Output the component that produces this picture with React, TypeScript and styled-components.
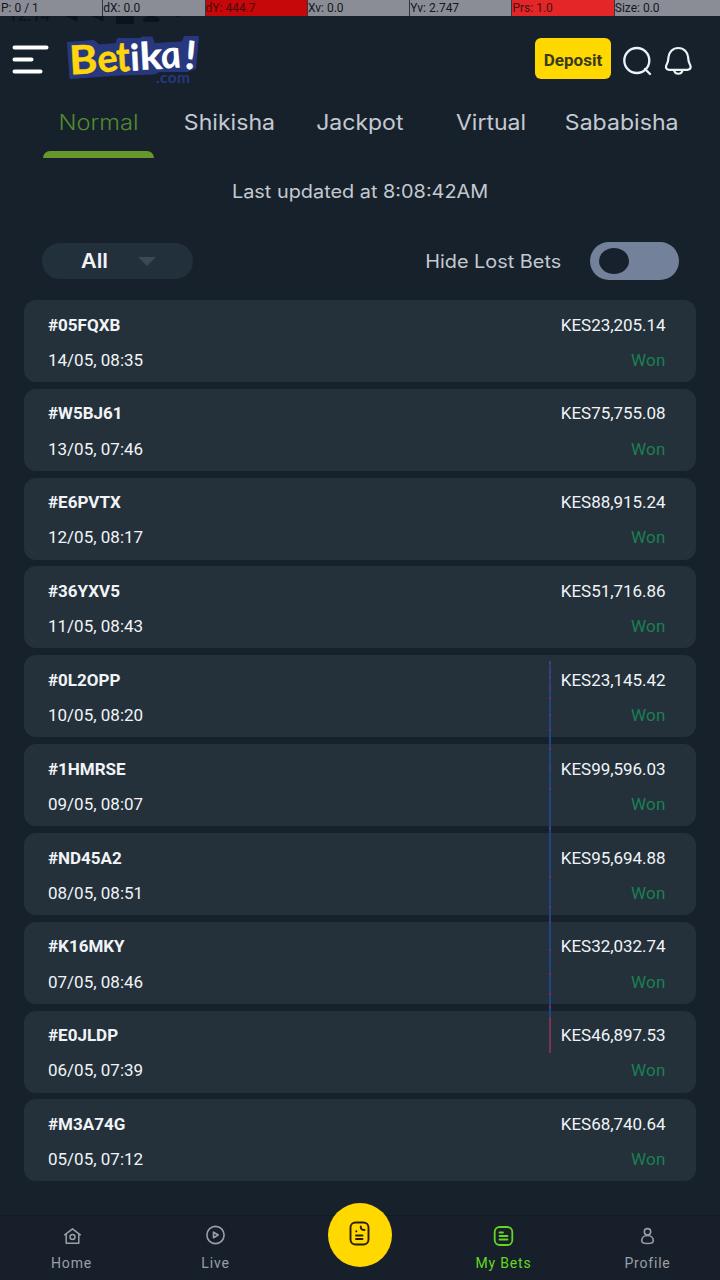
import React from "react";
import styled, { createGlobalStyle } from "styled-components";

const GlobalStyle = createGlobalStyle`
  body { margin: 0; background: #17212c; }
  * { box-sizing: border-box; }
`;

const Screen = styled.div`
  position: relative;
  width: 720px;
  height: 1280px;
  display: flex;
  flex-direction: column;
  overflow: hidden;
  background: #17212c;
  color: #f1f4f7;
  font-family: Roboto, sans-serif;
`;

const PointerBar = styled.div`
  display: grid;
  grid-template-columns: repeat(6, 102.3px) 1fr;
  height: 16px;
  flex: none;
  position: relative;
  z-index: 1;
`;

const PointerCell = styled.div<{ $bg?: string; $ink?: string }>`
  background: ${(p) => p.$bg ?? "rgba(144, 148, 156, 0.95)"};
  color: ${(p) => p.$ink ?? "#14171b"};
  font-size: 12px;
  line-height: 16px;
  padding-left: 1px;
  white-space: nowrap;
  & + & { border-left: 1px solid #33373d; padding-left: 0; }
`;

const StatusShade = styled.svg`
  position: absolute;
  left: 0;
  top: 0;
`;

const Header = styled.header`
  display: flex;
  align-items: center;
  height: 85px;
  padding: 0 28px 0 12px;
  flex: none;
`;

const Logo = styled.svg`
  margin-left: 15px;
  overflow: visible;
`;

const Deposit = styled.button`
  margin-left: auto;
  width: 76px;
  height: 41px;
  border: 0;
  border-radius: 6px;
  padding: 2px 0 0;
  background: #ffd800;
  color: #383a1c;
  font: 700 17px Roboto, sans-serif;
`;

const HeaderIcon = styled.svg<{ $gap: number }>`
  margin-left: ${(p) => p.$gap}px;
  margin-top: 4px;
`;

const Tabs = styled.nav`
  display: grid;
  grid-template-columns: repeat(5, 130.8px);
  justify-content: center;
  height: 57px;
  flex: none;
  font-family: Inter, sans-serif;
`;

const Tab = styled.div<{ $active?: boolean }>`
  display: flex;
  flex-direction: column;
  align-items: center;
  justify-content: space-between;
  padding-top: 9px;
  font-size: 21px;
  line-height: 26px;
  font-weight: ${(p) => (p.$active ? 300 : 400)};
  color: ${(p) => (p.$active ? "#518b2f" : "#c4c9d0")};
`;

const TabMark = styled.div`
  width: 111px;
  height: 7px;
  border-radius: 7px 7px 0 0;
  background: #67982c;
`;

const Wide = styled.span<{ $x: number; $origin?: string }>`
  display: inline-block;
  white-space: nowrap;
  transform: scaleX(${(p) => p.$x});
  transform-origin: ${(p) => p.$origin ?? "center"};
`;

const Updated = styled.div`
  height: 65px;
  flex: none;
  padding-top: 2px;
  text-align: center;
  font: 400 18px/63px Inter, sans-serif;
  color: #c4c9d0;
`;

const Filters = styled.div`
  display: flex;
  align-items: center;
  height: 76px;
  flex: none;
  padding: 0 41px 0 42px;
  font-family: Inter, sans-serif;
`;

const Picker = styled.div`
  display: flex;
  align-items: center;
  gap: 32px;
  width: 151px;
  height: 36px;
  padding-left: 39px;
  border-radius: 18px;
  background: #22303c;
  font-size: 20px;
  font-weight: 600;
`;

const HideLabel = styled.div`
  margin-left: auto;
  margin-right: 29px;
  font-size: 18px;
  color: #c4c9d0;
`;

const Toggle = styled.div`
  width: 89px;
  height: 38px;
  padding: 6px 9px;
  border-radius: 19px;
  background: #73829a;
`;

const Knob = styled.div`
  width: 30px;
  height: 26px;
  border-radius: 50%;
  background: #17212e;
`;

const BetList = styled.main`
  display: flex;
  flex-direction: column;
  gap: 6.83px;
  padding: 1px 24px 0;
  flex: 1;
`;

const BetCard = styled.article`
  display: grid;
  grid-template-columns: 1fr auto;
  grid-template-rows: 35.2px 35.2px;
  align-items: center;
  height: 82px;
  padding: 7px 30.5px 0 24px;
  border-radius: 12px;
  background: #24313b;
  font-size: 17px;
  line-height: 20px;
  flex: none;
`;

const BetId = styled.div`
  font-weight: 700;
  font-size: 17px;
`;

const Right = styled.div<{ $won?: boolean }>`
  text-align: right;
  color: ${(p) => (p.$won ? "#1a8052" : "inherit")};
  letter-spacing: ${(p) => (p.$won ? "0.2px" : "-0.04px")};
`;

const PointerTrail = styled.svg`
  position: absolute;
  left: 548px;
  top: 660px;
`;

const BottomNav = styled.nav`
  display: grid;
  grid-template-columns: repeat(5, 144px);
  height: 65px;
  flex: none;
  border-top: 1px solid #131b25;
  background: #171f2b;
`;

const NavItem = styled.div<{ $active?: boolean }>`
  display: flex;
  flex-direction: column;
  align-items: center;
  padding-top: 9px;
  padding-right: 1px;
  color: ${(p) => (p.$active ? "#64d81f" : "#9b9fa6")};
  font-size: 14px;
  line-height: 18px;
  letter-spacing: 0.8px;
  gap: 7px;
`;

const SlipButton = styled.div`
  display: flex;
  align-items: center;
  justify-content: center;
  justify-self: center;
  width: 64px;
  height: 64px;
  margin-top: -13px;
  margin-right: 1px;
  padding: 0 0 3px 0;
  border-radius: 50%;
  background: #ffd800;
`;

const BETS = [
  ["#05FQXB", "KES23,205.14", "14/05, 08:35"],
  ["#W5BJ61", "KES75,755.08", "13/05, 07:46"],
  ["#E6PVTX", "KES88,915.24", "12/05, 08:17"],
  ["#36YXV5", "KES51,716.86", "11/05, 08:43"],
  ["#0L2OPP", "KES23,145.42", "10/05, 08:20"],
  ["#1HMRSE", "KES99,596.03", "09/05, 08:07"],
  ["#ND45A2", "KES95,694.88", "08/05, 08:51"],
  ["#K16MKY", "KES32,032.74", "07/05, 08:46"],
  ["#E0JLDP", "KES46,897.53", "06/05, 07:39"],
  ["#M3A74G", "KES68,740.64", "05/05, 07:12"],
];

const TABS: [string, number][] = [
  ["Normal", 1.13],
  ["Shikisha", 1.1],
  ["Jackpot", 1.095],
  ["Virtual", 1.095],
  ["Sababisha", 1.1],
];

const MARKS = [3, 12, 18, 28, 38, 55, 70, 89, 108, 129, 168, 217, 247, 262, 290, 314, 334, 347];

function BetikaLogo() {
  return (
    <Logo width="136" height="52" viewBox="64 33 136 52">
      <path
        d="M67.500 42.500 L94 40.500 L99 45 L116 43.500 L117.500 38.500 L140 38.500 L142 37 L152 37 L154.500 43.500 L182 42 L184.500 36.500 L198.500 36.500 L195.500 68.500 L187 71.500 L160 71.500 L154 74 L119 75 L70 78.500 Z"
        fill="#27387f"
        stroke="#27387f"
        strokeWidth="1"
        strokeLinejoin="round"
      />
      <g fontFamily="Lato, sans-serif" fontWeight="700">
        <text transform="translate(70 74.500) rotate(-3) scale(1.120 1.050)" fontSize="38" fill="#ffd60a" stroke="#ffd60a" strokeWidth="0.500">B</text>
        <text transform="translate(99 73) rotate(-8)" fontSize="38" fill="#ffd60a" stroke="#ffd60a" strokeWidth="0.600">e</text>
        <text transform="translate(117 71.500) rotate(-3) scale(1 1.150)" fontSize="36" fill="#ffd60a" stroke="#ffd60a" strokeWidth="0.600">t</text>
        <text transform="translate(131 70.500) rotate(-3)" fontSize="36" fill="#fff" stroke="#fff" strokeWidth="0.600">i</text>
        <text transform="translate(140.500 70) rotate(-3) scale(1.100 1)" fontSize="38" fill="#fff" stroke="#fff" strokeWidth="0.400">k</text>
        <text transform="translate(163 68.500) rotate(-3) skewX(9)" fontSize="39" fill="#fff" fontStyle="italic">a</text>
        <text transform="translate(184 68.500) rotate(5)" fontSize="39" fill="#fff" stroke="#fff" strokeWidth="0.400">!</text>
      </g>
      <text x="156" y="82.500" fontFamily="Lato" fontWeight="700" fontSize="15.500" fill="#27387f" textLength="34">.com</text>
    </Logo>
  );
}

export default function App() {
  return (
    <Screen>
      <GlobalStyle />
      <StatusShade width="220" height="24" fill="#0b131d">
        <text x="8" y="21" fontSize="17" fontFamily="Roboto" fontWeight="500" textLength="42">12:14</text>
        <path d="M65 16 L79 10 L77 22 L72 19Z M91 16 L105 10 L103 22 L98 19Z M116 9h18v15h-18Z M143 20q1-4 8-4t9 4l-2 2h-14Z" />
        <circle cx="178" cy="15" r="2" />
      </StatusShade>
      <PointerBar>
        <PointerCell>P: 0 / 1</PointerCell>
        <PointerCell>dX: 0.0</PointerCell>
        <PointerCell $bg="#c6080b" $ink="#4a0a0c">dY: 444.7</PointerCell>
        <PointerCell>Xv: 0.0</PointerCell>
        <PointerCell>Yv: 2.747</PointerCell>
        <PointerCell $bg="#e32627" $ink="#4c0f11">Prs: 1.0</PointerCell>
        <PointerCell>Size: 0.0</PointerCell>
      </PointerBar>

      <Header>
        <svg width="37" height="30" stroke="#fff" strokeWidth="4" strokeLinecap="round">
          <path d="M2.500 3.500H34.500M2.500 15.500H19.500M2.500 27.500H28.500" />
        </svg>
        <BetikaLogo />
        <Deposit>Deposit</Deposit>
        <HeaderIcon $gap={11} width="30" height="30" fill="none" stroke="#edf2f7" strokeWidth="2.300" strokeLinecap="round">
          <circle cx="14.800" cy="14.500" r="12.500" />
          <path d="M23 23L28 28" />
        </HeaderIcon>
        <HeaderIcon $gap={12} width="28" height="30" fill="none" stroke="#edf2f7" strokeWidth="2.200" strokeLinejoin="round">
          <path d="M14.300 2C8.500 2 5 6.500 4.500 11C4.200 14 4.300 15.700 2.900 18C1.300 20.700 1.700 23.700 5 23.900H23.600C26.900 23.700 27.300 20.700 25.700 18C24.300 15.700 24.400 14 24.100 11C23.600 6.500 20.100 2 14.300 2Z" />
          <path d="M10 24C11 29 17.600 29 18.600 24" />
        </HeaderIcon>
      </Header>

      <Tabs>
        {TABS.map(([name, x], i) => (
          <Tab key={name} $active={i === 0}>
            <Wide $x={x}>{name}</Wide>
            {i === 0 && <TabMark />}
          </Tab>
        ))}
      </Tabs>

      <Updated>
        <Wide $x={1.104}>Last updated at 8:08:42AM</Wide>
      </Updated>

      <Filters>
        <Picker>
          <Wide $x={1.08} $origin="left">All</Wide>
          <svg width="18" height="9" fill="#3c4955"><path d="M0 0H18L9 9Z" /></svg>
        </Picker>
        <HideLabel>
          <Wide $x={1.104} $origin="right">Hide Lost Bets</Wide>
        </HideLabel>
        <Toggle><Knob /></Toggle>
      </Filters>

      <BetList>
        {BETS.map(([id, amount, date]) => (
          <BetCard key={id}>
            <BetId>{id}</BetId>
            <Right>{amount}</Right>
            <div>{date}</div>
            <Right $won>Won</Right>
          </BetCard>
        ))}
      </BetList>

      <BottomNav>
        <NavItem>
          <svg width="22" height="22" viewBox="0 0 22 22" fill="none" stroke="currentColor" strokeWidth="1.500" strokeLinejoin="round" strokeLinecap="round">
            <path d="M3.700 9.800L11.500 3.800L19.300 9.800M5.200 9V18.300H17.800V9" />
            <circle cx="11.500" cy="12" r="2.500" />
          </svg>
          Home
        </NavItem>
        <NavItem>
          <svg width="22" height="22" viewBox="0 0 22 22" fill="none" stroke="currentColor" strokeWidth="1.600" strokeLinejoin="round">
            <circle cx="10.500" cy="10" r="8.600" />
            <path d="M8.500 7.200V12.800L13.200 10Z" />
          </svg>
          Live
        </NavItem>
        <SlipButton>
          <svg width="22" height="26" viewBox="0 0 22 26" fill="none" stroke="#2b1e08" strokeWidth="1.900" strokeLinecap="round">
            <rect x="1.500" y="1.500" width="18" height="22" rx="5" />
            <path d="M11.800 5.500V6.500Q12 9 15.500 9M7 14.500H13.500M7 18H13.500M7.300 10.300V10.400" />
          </svg>
        </SlipButton>
        <NavItem $active>
          <svg width="22" height="22" viewBox="0 0 22 22" fill="none" stroke="currentColor" strokeWidth="1.800" strokeLinecap="round">
            <rect x="1.700" y="2" width="17.600" height="18" rx="5" />
            <path d="M6.500 7.500H10M6.500 11H14.500M6.500 14.500H14.500" />
          </svg>
          My Bets
        </NavItem>
        <NavItem>
          <svg width="22" height="22" viewBox="0 0 22 22" fill="none" stroke="currentColor" strokeWidth="1.600">
            <circle cx="10.500" cy="6.800" r="3.200" />
            <path d="M10.500 10.500C7.500 10.500 4.700 12.500 4.700 15.700C4.700 17.800 6.500 18.500 10.500 18.500S16.300 17.800 16.300 15.700C16.300 12.500 13.500 10.500 10.500 10.500Z" />
          </svg>
          Profile
        </NavItem>
      </BottomNav>

      <PointerTrail width="4" height="394">
        <path d="M2 1V357" stroke="#1f4682" strokeWidth="2" />
        <path d="M2 357V393" stroke="#7b3451" strokeWidth="2" />
        {MARKS.map((y) => (
          <rect key={y} x="1" y={y - 1} width="2" height="2" fill="#842c50" />
        ))}
      </PointerTrail>
    </Screen>
  );
}
